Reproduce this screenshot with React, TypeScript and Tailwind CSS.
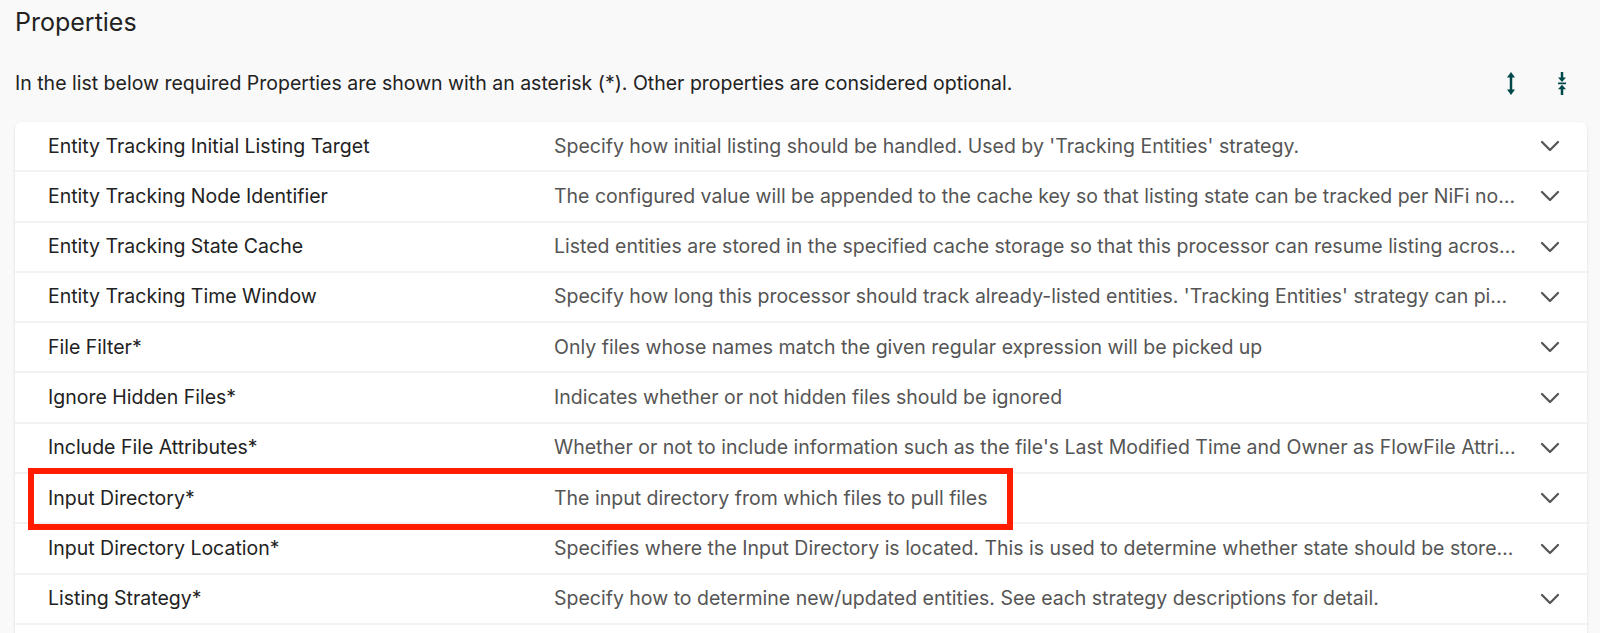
import { ChevronDown } from "lucide-react";

interface PropertyRow {
    name: string;
    description: string;
}

const rows: PropertyRow[] = [
    { name: "Entity Tracking Initial Listing Target", description: "Specify how initial listing should be handled. Used by 'Tracking Entities' strategy." },
    { name: "Entity Tracking Node Identifier", description: "The configured value will be appended to the cache key so that listing state can be tracked per NiFi node rather than cluster wide when tracking state is scoped to LOCAL. Used by 'Tracking Entities' strategy." },
    { name: "Entity Tracking State Cache", description: "Listed entities are stored in the specified cache storage so that this processor can resume listing across NiFi restart or in case of primary node change." },
    { name: "Entity Tracking Time Window", description: "Specify how long this processor should track already-listed entities. 'Tracking Entities' strategy can pick any entity whose timestamp is inside the specified time window." },
    { name: "File Filter*", description: "Only files whose names match the given regular expression will be picked up" },
    { name: "Ignore Hidden Files*", description: "Indicates whether or not hidden files should be ignored" },
    { name: "Include File Attributes*", description: "Whether or not to include information such as the file's Last Modified Time and Owner as FlowFile Attributes." },
    { name: "Input Directory*", description: "The input directory from which files to pull files" },
    { name: "Input Directory Location*", description: "Specifies where the Input Directory is located. This is used to determine whether state should be stored locally or across the cluster." },
    { name: "Listing Strategy*", description: "Specify how to determine new/updated entities. See each strategy descriptions for detail." },
    { name: "Maximum File Age", description: "The maximum age that a file must be in order to be pulled; any file older than this amount of time will be ignored" },
];

const ExpandIcon = () => (
    <svg width="8" height="23" viewBox="0 0 8 23" className="fill-[#004849]">
        <polygon points="4,0 8,5.5 0,5.5" />
        <rect x="2.75" y="4" width="2.5" height="15" />
        <polygon points="4,23 8,17.5 0,17.5" />
    </svg>
);

const CollapseIcon = () => (
    <svg width="8" height="23" viewBox="0 0 8 23" className="fill-[#004849]">
        <rect x="2.75" y="0" width="2.5" height="6" />
        <polygon points="0,5.5 8,5.5 4,10" />
        <rect x="0" y="10.5" width="8" height="1.75" />
        <polygon points="4,12.75 8,17.25 0,17.25" />
        <rect x="2.75" y="16.75" width="2.5" height="6.25" />
    </svg>
);

const App = () => {
    return (
        <div className="relative h-[633px] w-full overflow-hidden bg-[#f9f9f9] pl-[15px] pr-[13px] font-['Inter','Liberation_Sans',sans-serif] text-[#222]">
            <h1 className="pt-[6px] text-[25px] leading-[32px] font-normal text-[#222]">Properties</h1>

            <div className="mt-[33px] flex items-center justify-between">
                <p className="text-[19.5px] leading-[24px] text-[#222]">
                    In the list below required Properties are shown with an asterisk (*). Other properties are considered optional.
                </p>
                <div className="flex items-center gap-[43px] pr-[21px]">
                    <ExpandIcon />
                    <CollapseIcon />
                </div>
            </div>

            <div className="mt-[27px] overflow-hidden rounded-[6px] bg-white shadow-[0_1px_3px_rgba(0,0,0,0.12)]">
                {rows.map((row) => (
                    <div
                        key={row.name}
                        className="flex h-[50.3px] items-center border-b-2 border-[#f2f2f2] pl-[33px] pr-[21px] text-[19.5px]"
                    >
                        <div className="w-[506px] shrink-0 truncate text-[#222]">{row.name}</div>
                        <div className="min-w-0 flex-1 truncate pr-[16px] text-[#555]">{row.description}</div>
                        <ChevronDown className="h-8 w-8 shrink-0 text-[#555]" strokeWidth={1.7} />
                    </div>
                ))}
            </div>

            <div className="pointer-events-none absolute top-[468px] left-[28px] h-[62px] w-[985px] border-[6px] border-[#ff1c00]"></div>
        </div>
    );
};

export default App;
